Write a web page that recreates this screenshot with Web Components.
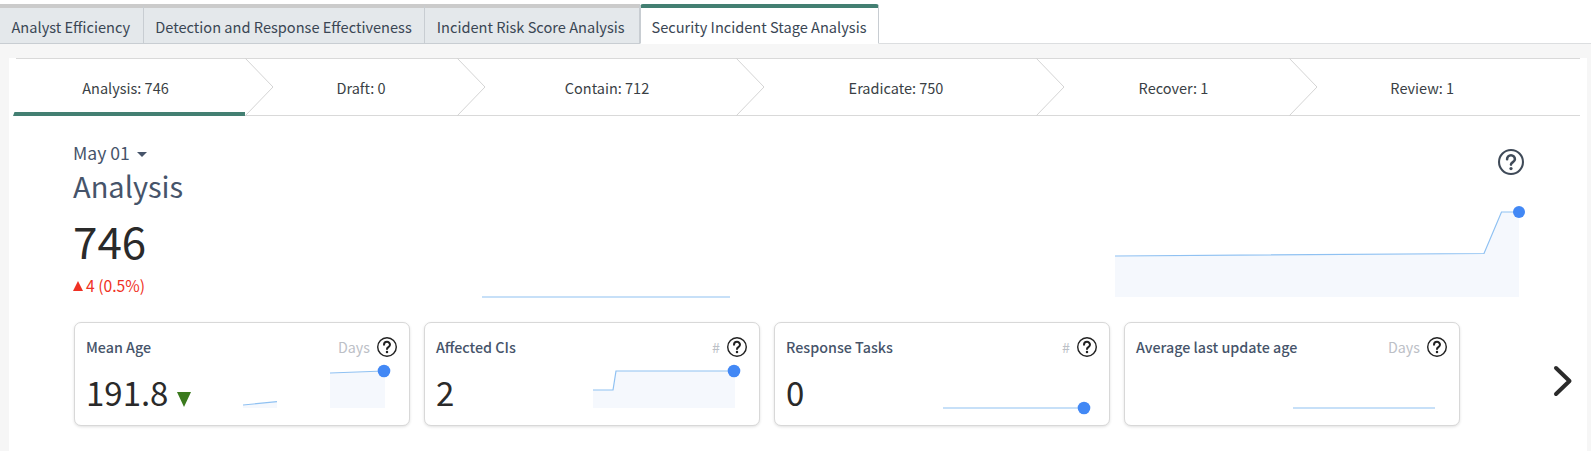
<!DOCTYPE html>
<html>
<head>
<meta charset="utf-8">
<title>Security Incident Stage Analysis</title>
<style>
    html, body { margin: 0; padding: 0; background: #fff; }
    body { width: 1591px; height: 451px; overflow: hidden; font-family: "Noto Sans CJK SC", "Noto Sans", sans-serif; }
</style>
</head>
<body>
<tab-bar>
    <tab-item w="143.7">Analyst Efficiency</tab-item>
    <tab-item w="281.6">Detection and Response Effectiveness</tab-item>
    <tab-item w="214.7">Incident Risk Score Analysis</tab-item>
    <tab-item w="239.3" active>Security Incident Stage Analysis</tab-item>
</tab-bar>
<stage-panel>
    <stage-bar>
        <stage-step label="Analysis" value="746" w="231" active style="padding-right:7px"></stage-step>
        <stage-step label="Draft" value="0" w="212" style="padding-left:21px"></stage-step>
        <stage-step label="Contain" value="712" w="279" style="padding-left:22px"></stage-step>
        <stage-step label="Eradicate" value="750" w="300" style="padding-left:21px"></stage-step>
        <stage-step label="Recover" value="1" w="253" style="padding-left:23px"></stage-step>
        <stage-step label="Review" value="1" w="291.5" last style="padding-right:24px"></stage-step>
    </stage-bar>
    <stage-hero date="May 01" title="Analysis" value="746" delta="4 (0.5%)"></stage-hero>
    <card-row>
        <metric-card title="Mean Age" unit="Days" value="191.8" down
            line="0,34 34,30.7" line2="87,2 141,0" dot="141,0"
            area="0,34 34,30.7 34,37 0,37" area2="87,2 142,0 142,37 87,37"></metric-card>
        <metric-card title="Affected CIs" unit="#" value="2" line="0,19 20,19 23,0 141,0" dot="141,0" area="0,19 20,19 23,0 142,0 142,37 0,37"></metric-card>
        <metric-card title="Response Tasks" unit="#" value="0" line="0,37 141,37" dot="141,37"></metric-card>
        <metric-card title="Average last update age" unit="Days" line="0,37 142,37"></metric-card>
        <next-button></next-button>
    </card-row>
</stage-panel>

<script>
    const FONT = '"Noto Sans CJK SC", "Noto Sans", sans-serif';
    const LINE = '#8fc1f2';
    const FILL = '#f5f8fd';
    const DOT = '#4288f5';

    function helpIcon(size, color, stroke) {
        return `<svg width="${size}" height="${size}" viewBox="0 0 24 24" fill="none" style="display:block">
            <circle cx="12" cy="12" r="${12 - stroke / 2}" stroke="${color}" stroke-width="${stroke}"/>
            <path d="M8.4 9.4a3.6 3.6 0 0 1 7.2 0c0 2.6-3.6 2.8-3.6 5" stroke="${color}" stroke-width="2.4" stroke-linecap="round"/>
            <circle cx="12" cy="18" r="1.5" fill="${color}"/>
        </svg>`;
    }

    class TabBar extends HTMLElement {
        constructor() {
            super();
            this.attachShadow({mode: 'open'}).innerHTML = `
                <style>
                    :host { display: flex; box-sizing: border-box; height: 40px; margin-top: 4px; border-bottom: 1px solid #dcdee0; background: #fff; }
                </style>
                <slot></slot>`;
        }
    }

    class TabItem extends HTMLElement {
        connectedCallback() {
            this.style.width = this.getAttribute('w') + 'px';
            this.attachShadow({mode: 'open'}).innerHTML = `
                <style>
                    :host {
                        display: flex; align-items: center; box-sizing: border-box; height: 40px; flex: none;
                        padding: 2px 0 0 11.5px; white-space: nowrap;
                        background: #e4e8eb; color: #3a4654;
                        border-top: 4px solid #cbcbcb; border-right: 1px solid #c8cdd2; border-bottom: 1px solid #c8cdd2;
                        font: 14.6px/20px ${FONT};
                    }
                    :host([active]) {
                        background: #fff; border-top-color: #437f72; border-bottom-color: #fff;
                        border-radius: 3px 3px 0 0; border-left: 1px solid #c8cdd2; padding-left: 10.5px;
                    }
                </style>
                <slot></slot>`;
        }
    }

    class StagePanel extends HTMLElement {
        constructor() {
            super();
            this.attachShadow({mode: 'open'}).innerHTML = `
                <style>
                    :host { display: block; background: #f6f6f6; padding: 14px 4px 0 9px; height: 407px; box-sizing: border-box; }
                    .sheet { background: #fff; height: 100%; }
                </style>
                <div class="sheet"><slot></slot></div>`;
        }
    }

    class StageBar extends HTMLElement {
        constructor() {
            super();
            this.attachShadow({mode: 'open'}).innerHTML = `
                <style>
                    :host { display: flex; margin: 0 7px 0 4.5px; height: 58px; box-sizing: border-box; border-top: 1px solid #d9d9d9; border-bottom: 1px solid #d9d9d9; }
                </style>
                <slot></slot>`;
        }
    }

    class StageStep extends HTMLElement {
        connectedCallback() {
            this.style.width = this.getAttribute('w') + 'px';
            const root = this.attachShadow({mode: 'open'});
            const chevron = this.hasAttribute('last') ? '' : `
                <svg class="chev" width="30" height="58" viewBox="0 0 30 58" fill="none">
                    <path d="M0 0L28 29L0 58" stroke="#d4d4d4" stroke-width="1"/>
                </svg>`;
            const bar = this.hasAttribute('active') ? `
                <span class="mask"></span>
                <svg class="bar" width="232" height="4" viewBox="0 0 232 4"><path d="M1.5 0H232V4H0Z" fill="#437f72"/></svg>` : '';
            root.innerHTML = `
                <style>
                    :host {
                        display: flex; align-items: center; justify-content: center; position: relative;
                        box-sizing: border-box; flex: none; height: 56px; padding-top: 2px;
                        color: #3a3f45; font: 14.5px/20px ${FONT};
                    }
                    .chev { position: absolute; left: 100%; top: -1px; z-index: 1; }
                    .bar { position: absolute; left: -1px; bottom: -1px; display: block; }
                    .mask { position: absolute; left: 0; top: -1px; width: 2.5px; height: 1px; background: #fff; }
                </style>
                <span>${this.getAttribute('label')}: ${this.getAttribute('value')}</span>
                ${chevron}${bar}`;
        }
    }

    class StageHero extends HTMLElement {
        connectedCallback() {
            this.attachShadow({mode: 'open'}).innerHTML = `
                <style>
                    :host { display: flex; height: 206px; padding: 25px 0 0 64px; box-sizing: border-box; color: #46546a; font-family: ${FONT}; }
                    .info { width: 409px; flex: none; }
                    .date { font-size: 17.6px; line-height: 24px; display: flex; align-items: center; gap: 7px; }
                    .caret { width: 0; height: 0; border: 5px solid transparent; border-top: 5px solid #46546a; border-bottom: 0; margin-top: 2px; }
                    .title { font-size: 29px; line-height: 36px; margin-top: 1.7px; }
                    .value { font-size: 44px; line-height: 50px; color: #2a2a2a; margin-top: 12px; }
                    .delta { font-size: 15.7px; line-height: 20px; color: #ef3124; display: flex; align-items: center; gap: 3px; margin-top: 11.6px; }
                    .up { width: 0; height: 0; border: 5px solid transparent; border-bottom: 10px solid #ef3124; border-top: 0; }
                    .charts { display: flex; align-items: flex-start; }
                    svg { display: block; }
                    .small { margin-top: 153.7px; }
                    .large { margin-left: 385px; margin-top: 58px; }
                    .help { margin: 8px 0 0 -29px; }
                </style>
                <div class="info">
                    <div class="date">${this.getAttribute('date')} <span class="caret"></span></div>
                    <div class="title">${this.getAttribute('title')}</div>
                    <div class="value">${this.getAttribute('value')}</div>
                    <div class="delta"><span class="up"></span> ${this.getAttribute('delta')}</div>
                </div>
                <div class="charts">
                    <svg class="small" width="248" height="4" viewBox="0 0 248 4"><path d="M0 2H248" stroke="${LINE}" stroke-width="1.2"/></svg>
                    <svg class="large" width="412" height="98" viewBox="0 0 412 98" fill="none">
                        <path d="M0 57L369 54.5L386.5 13H404V98H0Z" fill="${FILL}"/>
                        <path d="M0 57L369 54.5L386.5 13H404" stroke="${LINE}" stroke-width="1.2"/>
                        <circle cx="404" cy="13" r="6" fill="${DOT}"/>
                    </svg>
                    <span class="help">${helpIcon(26, '#3f4a58', 1.9)}</span>
                </div>`;
        }
    }

    class CardRow extends HTMLElement {
        constructor() {
            super();
            this.attachShadow({mode: 'open'}).innerHTML = `
                <style>
                    :host { display: flex; gap: 14px; margin-left: 64.5px; }
                </style>
                <slot></slot>`;
        }
    }

    class MetricCard extends HTMLElement {
        connectedCallback() {
            const attr = n => this.getAttribute(n);
            const value = attr('value') || '';
            const arrow = this.hasAttribute('down') ? '<span class="down"></span>' : '';
            const poly = (pts) => pts ? `<polygon points="${pts}" fill="${FILL}"/>` : '';
            const stroke = (pts) => pts ? `<polyline points="${pts}" fill="none" stroke="${LINE}" stroke-width="1.2"/>` : '';
            const dot = attr('dot') ? attr('dot').split(',') : null;
            this.attachShadow({mode: 'open'}).innerHTML = `
                <style>
                    :host {
                        display: block; box-sizing: border-box; width: 336px; height: 104px; flex: none;
                        background: #fff; border: 1px solid #d8d8d8; border-radius: 7px;
                        box-shadow: 0 1px 3px rgba(0,0,0,.12);
                        padding: 12px 11.5px 0 11.5px; font-family: ${FONT};
                    }
                    .head { display: flex; align-items: center; height: 24px; }
                    .title { color: #46546a; font-size: 14.3px; line-height: 20px; font-weight: 500; flex: 1; }
                    .unit { color: #bcc0c6; font-size: 14.3px; line-height: 20px; margin-right: 7px; }
                    .body { display: flex; justify-content: space-between; align-items: flex-end; height: 60px; }
                    .value { color: #2a2a2a; font-size: 33px; line-height: 46px; display: flex; align-items: center; gap: 9px; margin-bottom: 3.7px; }
                    .down { width: 0; height: 0; border: 7.5px solid transparent; border-top: 15px solid #3b7a1e; border-bottom: 0; margin-top: 14px; }
                    svg.spark { display: block; overflow: visible; margin: 0 12.5px 10px 0; }
                </style>
                <div class="head">
                    <span class="title">${attr('title')}</span>
                    <span class="unit">${attr('unit')}</span>
                    ${helpIcon(20, '#222', 1.7)}
                </div>
                <div class="body">
                    <span class="value">${value}${arrow}</span>
                    <svg class="spark" width="142" height="38" viewBox="0 0 142 38">
                        ${poly(attr('area'))}${poly(attr('area2'))}
                        ${stroke(attr('line'))}${stroke(attr('line2'))}
                        ${dot ? `<circle cx="${dot[0]}" cy="${dot[1]}" r="6.3" fill="${DOT}"/>` : ''}
                    </svg>
                </div>`;
        }
    }

    class NextButton extends HTMLElement {
        constructor() {
            super();
            this.attachShadow({mode: 'open'}).innerHTML = `
                <style>
                    :host { display: flex; align-items: center; margin: 14px 0 0 79px; }
                    svg { display: block; }
                </style>
                <svg width="20" height="34" viewBox="0 0 20 34" fill="none">
                    <path d="M3 4L16.5 17L3 30" stroke="#2b2b2b" stroke-width="4" stroke-linecap="round" stroke-linejoin="round"/>
                </svg>`;
        }
    }

    customElements.define('tab-bar', TabBar);
    customElements.define('tab-item', TabItem);
    customElements.define('stage-panel', StagePanel);
    customElements.define('stage-bar', StageBar);
    customElements.define('stage-step', StageStep);
    customElements.define('stage-hero', StageHero);
    customElements.define('card-row', CardRow);
    customElements.define('metric-card', MetricCard);
    customElements.define('next-button', NextButton);
</script>
</body>
</html>
